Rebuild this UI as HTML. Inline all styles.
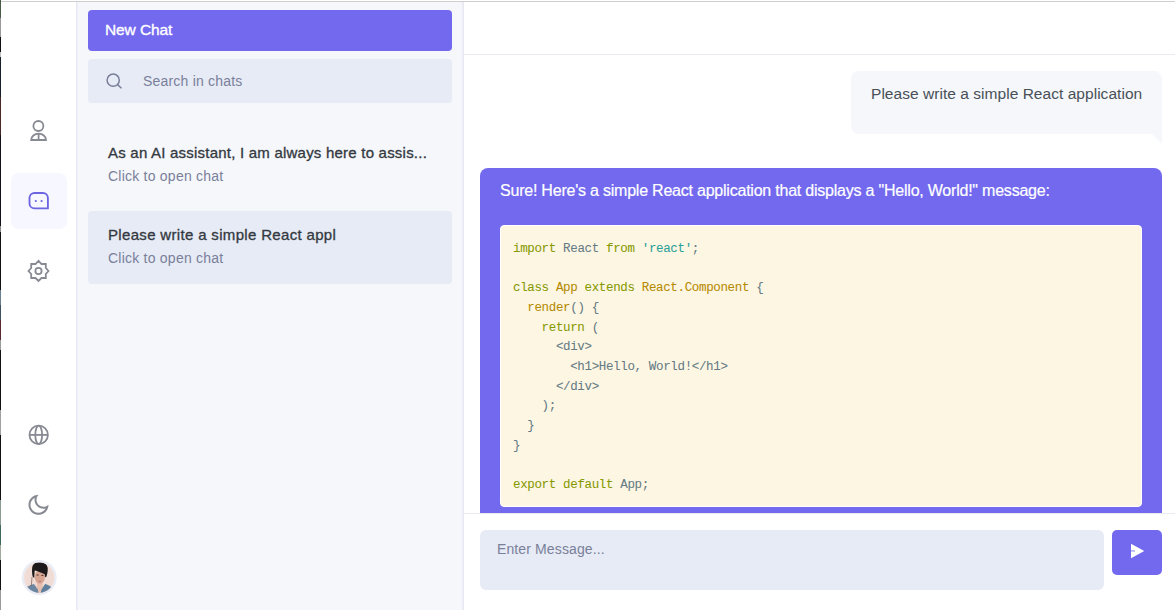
<!DOCTYPE html>
<html><head><meta charset="utf-8">
<style>
*{box-sizing:border-box;margin:0;padding:0}
html,body{width:1175px;height:610px;overflow:hidden;background:#fff;font-family:"Liberation Sans",sans-serif;color:#495057;position:relative}
.abs{position:absolute}
#edge{left:0;top:0;width:1px;height:610px;background:linear-gradient(#4a5a48 0px,#4a5a48 18px,#9a9a9a 18px,#9a9a9a 37px,#101014 37px,#101014 52px,#c0c0c0 52px,#c0c0c0 57px,#1a1e28 57px,#1a1e28 97px,#4a2828 97px,#4a2828 135px,#121218 135px,#121218 226px,#8a8a8a 226px,#8a8a8a 232px,#121214 232px,#121214 290px,#6a8090 290px,#6a8090 305px,#405060 305px,#405060 320px,#5a2830 320px,#5a2830 340px,#9a9a9a 340px,#9a9a9a 350px,#121214 350px,#121214 410px,#a0a0a0 410px,#a0a0a0 435px,#121214 435px,#121214 500px,#8a9a90 500px,#8a9a90 525px,#406858 525px,#406858 545px,#a0a8a0 545px,#a0a8a0 560px,#121214 560px,#121214 590px,#9a9a9a 590px,#9a9a9a 610px)}
#topline{left:1px;top:1px;width:1174px;height:1px;background:#cfcfcf}
#nav{left:1px;top:2px;width:75px;height:608px;background:#fff}
#side{left:76px;top:2px;width:388px;height:608px;background:#f5f7fb;background-image:linear-gradient(90deg,#e9e9f3 0,#e9e9f3 1px,#efeff9 1px,#efeff9 2px,transparent 2px,transparent 385px,#f3f3fc 385px,#f3f3fc 386px,#efeff9 386px,#efeff9 387px,#e8e8f1 387px)}
.btn-new{left:88px;top:10px;width:364px;height:40.6px;background:#7269ef;border-radius:4px}
.btn-txt{left:105px;top:21px;color:#fff;font-size:15.5px;letter-spacing:-.1px;-webkit-text-stroke:.35px #fff;white-space:nowrap}
.search{left:88px;top:59px;width:364px;height:44.4px;background:#e6ebf5;border-radius:4px}
.search-ph{left:143px;top:60px;height:43px;line-height:43px;font-size:14px;color:#7a7f9a;letter-spacing:.2px}
.item{left:88px;width:364px;height:73px;border-radius:4px}
.item.active{background:#e6ebf5}
.t1{font-size:15px;letter-spacing:.22px;-webkit-text-stroke:.32px #343941;color:#343941;white-space:nowrap}
.t2{font-size:14px;color:#7a7f9a;letter-spacing:.23px;white-space:nowrap}
#main{left:464px;top:2px;width:711px;height:608px;background:#fff}
#hdr{left:464px;top:54px;width:711px;height:1px;background:#eaeaf1}
#ftrline{left:464px;top:513px;width:711px;height:1px;background:#eaeaf1}
.ubub{left:851px;top:71px;width:311px;height:63px;background:#f5f7fb;border-radius:8px 8px 0 8px}
.utail{left:1152px;top:134px;width:10px;height:10px;background:#f5f7fb;clip-path:polygon(0 0,100% 0,100% 100%)}
.utext{left:871px;top:85px;font-size:15.5px;letter-spacing:.04px;color:#495057;white-space:nowrap}
#clip{left:464px;top:55px;width:711px;height:458px;overflow:hidden}
.abub{left:16px;top:113px;width:682px;height:400px;background:#7269ef;border-radius:8px 8px 0 0}
.atext{left:36px;top:127px;font-size:16px;letter-spacing:-.22px;-webkit-text-stroke:.2px #fff;color:#fff;white-space:nowrap}
.code{left:36px;top:170px;width:642px;height:282px;background:#fdf6e3;border:1px solid #fff;border-radius:4px}
pre{position:absolute;left:49px;top:185px;-webkit-text-stroke:.05px currentColor;font-family:"Liberation Mono",monospace;font-size:12.5px;letter-spacing:-.35px;line-height:19.67px;color:#657b83}
.k{color:#859900}.s{color:#2aa198}.y{color:#b58900}
.input{left:480px;top:530px;width:624px;height:60px;background:#e6ebf5;border-radius:6px}
.input-ph{left:497px;top:541px;font-size:14px;letter-spacing:.12px;color:#7a7f9a;white-space:nowrap}
.send{left:1112px;top:530px;width:50px;height:45px;background:#7269ef;border-radius:5px}
.navact{left:11px;top:173px;width:56px;height:56px;background:#f6f7ff;border-radius:8px}
svg{position:absolute;overflow:visible}
</style></head><body>
<div id="nav" class="abs"></div>
<div id="side" class="abs"></div>
<div id="main" class="abs"></div>
<div id="edge" class="abs"></div>
<div id="topline" class="abs"></div>

<!-- nav icons -->
<svg class="abs" style="left:0;top:0" width="76" height="610" viewBox="0 0 76 610">
  <g fill="none" stroke="#878a92" stroke-width="1.8">
    <circle cx="38.4" cy="126" r="5"/>
    <path d="M31.2 140 A7.4 6.4 0 0 1 46 140 Z M38.6 133.6 V140"/>
  </g>
</svg>
<div class="abs navact"></div>
<svg class="abs" style="left:0;top:0" width="76" height="610" viewBox="0 0 76 610">
  <path d="M34.5 193 H42.9 A5 5 0 0 1 47.9 198 V208.4 H34.5 A5 5 0 0 1 29.5 203.4 V198 A5 5 0 0 1 34.5 193 Z" fill="none" stroke="#6c64e0" stroke-width="1.85"/>
  <circle cx="35.8" cy="201" r="1.1" fill="#6c64e0"/>
  <circle cx="41.6" cy="201" r="1.1" fill="#6c64e0"/>
  <g fill="none" stroke="#878a92" stroke-width="1.8" stroke-linejoin="miter">
    <path d="M38.5 260.8 L41.5 264 L45.8 264 L45.8 268 L48.5 271 L45.8 274 L45.8 278 L41.5 278 L38.5 281 L35.5 278 L31.2 278 L31.2 274 L28.5 271 L31.2 268 L31.2 264 L35.5 264 Z"/>
    <circle cx="38.5" cy="271" r="3.1"/>
    <circle cx="38.7" cy="434.9" r="9.2"/>
    <ellipse cx="38.7" cy="434.9" rx="3.4" ry="9.2"/>
    <path d="M29.5 434.9 H47.9"/>
  </g>
  <path transform="translate(26.5 492.8)" fill="#878a92" d="M10 7C10 10.866 13.134 14 17 14C18.9584 14 20.729 13.1957 21.9995 11.8995C22 11.933 22 11.9665 22 12C22 17.5228 17.5228 22 12 22C6.47715 22 2 17.5228 2 12C2 6.47715 6.47715 2 12 2C12.0335 2 12.067 2 12.1005 2.00049C10.8043 3.27098 10 5.04157 10 7ZM4 12C4 16.4183 7.58172 20 12 20C15.0583 20 17.7158 18.2839 19.062 15.7621C18.3945 15.9187 17.7035 16 17 16C12.0294 16 8 11.9706 8 7C8 6.29648 8.08133 5.60547 8.2379 4.938C5.71611 6.28423 4 8.9417 4 12Z"/>
  <!-- avatar -->
  <circle cx="39.2" cy="577.6" r="17.5" fill="#ebedf6"/>
  <circle cx="39.2" cy="577.6" r="15.1" fill="#f1dcd5"/>
  <clipPath id="av"><circle cx="39.2" cy="577.6" r="15.1"/></clipPath>
  <g clip-path="url(#av)">
    <path d="M37 581 L42.5 581 L43 596 L36 596 Z" fill="#e6bfae"/>
    <path d="M23 596 C23.5 589 27.5 585.5 34 584 L37.8 589.5 L39.3 596 Z" fill="#6b86a1"/>
    <path d="M55 596 C54.5 589 51 585.5 45 584 L41.5 589.5 L40 596 Z" fill="#61809d"/>
    <ellipse cx="39.8" cy="577" rx="5.1" ry="6.8" fill="#d8a593"/>
    <path d="M32.2 567.5 C33 563.5 36 562.3 39.5 562.3 C44 562.3 47.3 564.5 47.7 568 C48 571 47.2 575 46 577.5 L44.9 576.5 L44.7 574.2 C41 572.5 37.5 571.2 34.7 570.6 L34.2 578 L32.6 576.5 C32 573 31.9 570 32.2 567.5 Z" fill="#1d191b"/>
    <path d="M32 577 L31.3 586" stroke="#7a5a50" stroke-width=".7"/>
    <path d="M36.6 575 h2 M41.4 575.4 h2" stroke="#4a2e28" stroke-width="1"/>
    <path d="M38.4 581.3 h2.8" stroke="#b8706c" stroke-width=".9"/>
  </g>
</svg>

<!-- sidebar -->
<div class="abs btn-new"></div><div class="abs btn-txt">New Chat</div>
<div class="abs search"></div>
<svg class="abs" style="left:0;top:0" width="464" height="120">
  <g fill="none" stroke="#7a7f9a" stroke-width="1.5">
    <circle cx="113.2" cy="80.2" r="6.1"/>
    <path d="M117.6 84.6 L121.4 88.2"/>
  </g>
</svg>
<div class="abs search-ph">Search in chats</div>

<div class="abs item" style="top:129px"></div>
<div class="abs t1" style="left:108px;top:144px">As an AI assistant, I am always here to assis...</div>
<div class="abs t2" style="left:108px;top:168px">Click to open chat</div>
<div class="abs item active" style="top:211px"></div>
<div class="abs t1" style="left:108px;top:226px;letter-spacing:.33px">Please write a simple React appl</div>
<div class="abs t2" style="left:108px;top:250px">Click to open chat</div>

<!-- main -->
<div id="hdr" class="abs"></div>
<div class="abs ubub"></div>
<div class="abs utail"></div>
<div class="abs utext">Please write a simple React application</div>

<div id="clip" class="abs">
  <div class="abs abub"></div>
  <div class="abs atext">Sure! Here's a simple React application that displays a "Hello, World!" message:</div>
  <div class="abs code"></div>
<pre><span class="k">import</span> React <span class="k">from</span> <span class="s">'react'</span>;

<span class="k">class</span> <span class="y">App</span> <span class="k">extends</span> <span class="y">React.Component</span> {
  <span class="y">render</span>() {
    <span class="k">return</span> (
      &lt;div&gt;
        &lt;h1&gt;Hello, World!&lt;/h1&gt;
      &lt;/div&gt;
    );
  }
}

<span class="k">export</span> <span class="k">default</span> App;</pre>
</div>
<div id="ftrline" class="abs"></div>

<div class="abs input"></div>
<div class="abs input-ph">Enter Message...</div>
<div class="abs send"></div>
<svg class="abs" style="left:0;top:0" width="1175" height="610">
  <path d="M1131 543.7 L1144.3 551 L1131 558.2 Z" fill="#fff"/><rect x="1131" y="550.2" width="4" height="1.5" fill="#b0abf5"/>
</svg>
</body></html>
